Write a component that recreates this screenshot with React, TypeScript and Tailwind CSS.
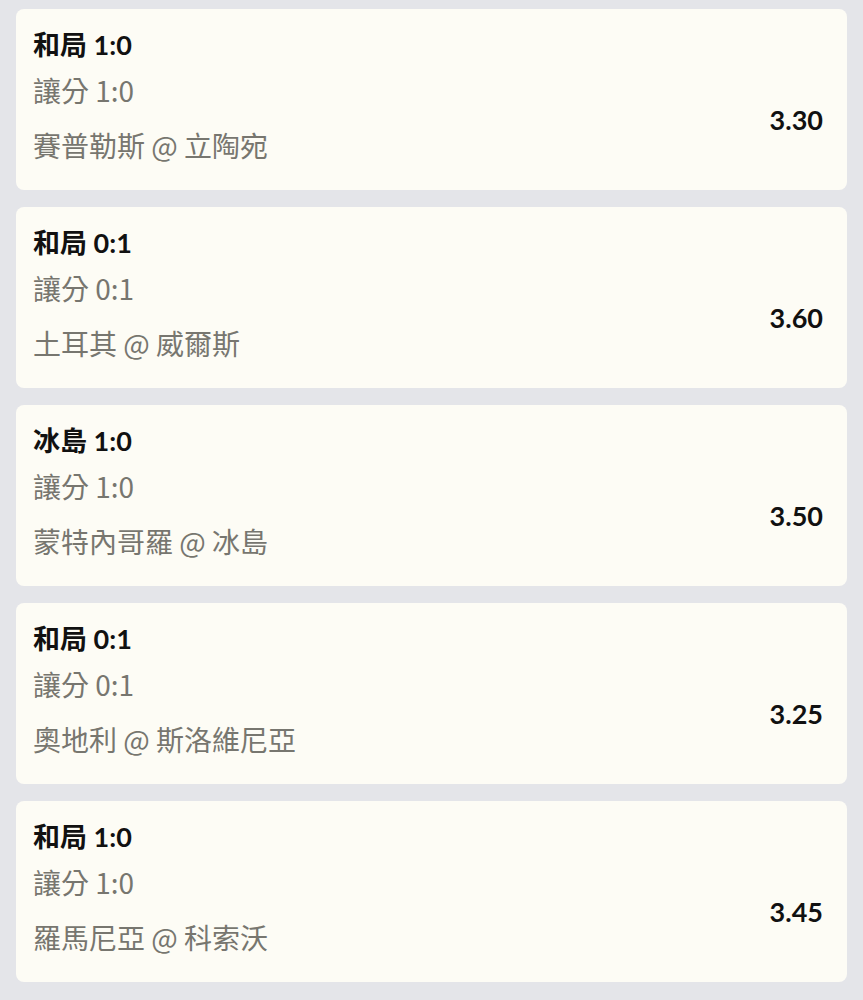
const rows = [
  { title: "和局 1:0", handicap: "讓分 1:0", match: "賽普勒斯 @ 立陶宛", odds: "3.30" },
  { title: "和局 0:1", handicap: "讓分 0:1", match: "土耳其 @ 威爾斯", odds: "3.60" },
  { title: "冰島 1:0", handicap: "讓分 1:0", match: "蒙特內哥羅 @ 冰島", odds: "3.50" },
  { title: "和局 0:1", handicap: "讓分 0:1", match: "奧地利 @ 斯洛維尼亞", odds: "3.25" },
  { title: "和局 1:0", handicap: "讓分 1:0", match: "羅馬尼亞 @ 科索沃", odds: "3.45" },
];

export default function App() {
  return (
    <div
      className="min-h-[1000px] bg-[#e4e5e9] px-4 pt-[9px] pb-4"
      style={{ fontFamily: '"Lato", "Noto Sans CJK TC", sans-serif' }}
    >
      <div className="flex flex-col gap-[17px]">
        {rows.map((row, i) => (
          <div key={i} className="h-[181px] rounded-lg bg-[#fdfcf5] pl-[17px] pr-6 pt-[18px]">
            <div className="text-[27px] font-bold leading-9 text-[#111]">{row.title}</div>
            <div className="mt-[7px] flex items-center justify-between">
              <div
                className="flex flex-col gap-[15px] text-[28px] leading-10 text-[#77766f]"
                style={{ fontFamily: '"Noto Sans CJK TC", sans-serif' }}
              >
                <div>{row.handicap}</div>
                <div>{row.match}</div>
              </div>
              <div className="mt-[5px] text-[27px] font-bold text-[#111]">{row.odds}</div>
            </div>
          </div>
        ))}
      </div>
    </div>
  );
}
